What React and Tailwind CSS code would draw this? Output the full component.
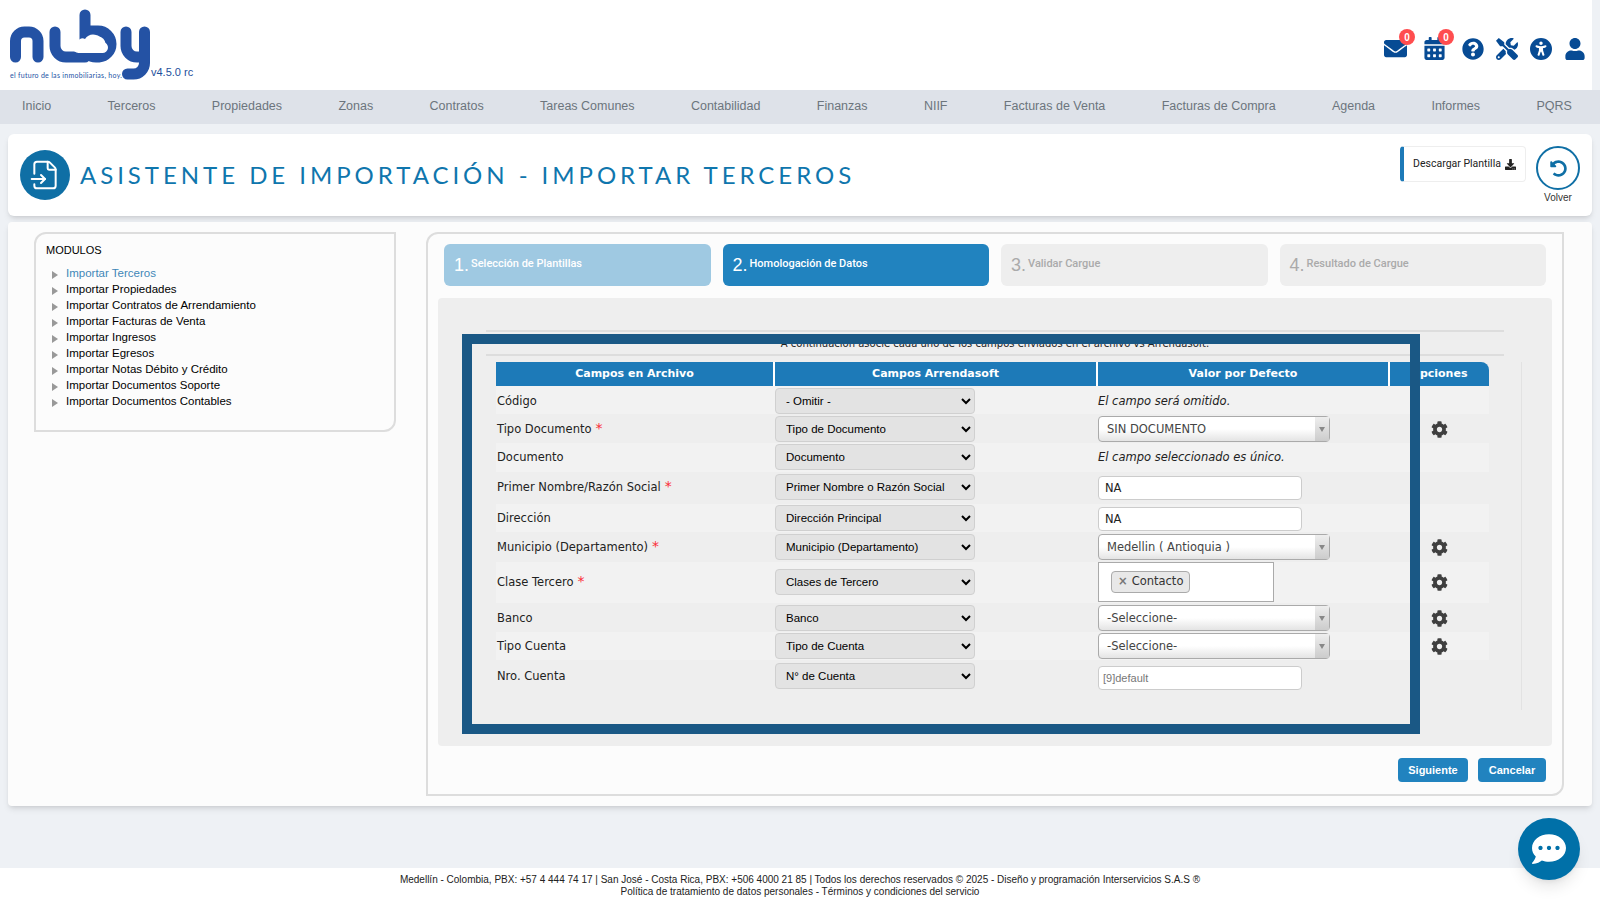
import { FileInput } from "lucide-react";
import {
  FaEnvelope,
  FaCalendarAlt,
  FaQuestionCircle,
  FaTools,
  FaUser,
  FaDownload,
  FaUndoAlt,
  FaCog,
  FaCommentDots,
} from "react-icons/fa";
import { FaUniversalAccess } from "react-icons/fa6";

const NAV = [
  "Inicio", "Terceros", "Propiedades", "Zonas", "Contratos", "Tareas Comunes", "Contabilidad",
  "Finanzas", "NIIF", "Facturas de Venta", "Facturas de Compra", "Agenda", "Informes", "PQRS",
];

const MODULES = [
  "Importar Terceros", "Importar Propiedades", "Importar Contratos de Arrendamiento",
  "Importar Facturas de Venta", "Importar Ingresos", "Importar Egresos",
  "Importar Notas Débito y Crédito", "Importar Documentos Soporte", "Importar Documentos Contables",
];

const STEPS = [
  { n: "1", label: "Selección de Plantillas", box: "bg-[#9fc9e2] text-white" },
  { n: "2", label: "Homologación de Datos", box: "bg-[#2183bf] text-white" },
  { n: "3", label: "Validar Cargue", box: "bg-[#eeeeee] text-[#aaaaaa]" },
  { n: "4", label: "Resultado de Cargue", box: "bg-[#eeeeee] text-[#aaaaaa]" },
];

const ROWS = [
  { label: "Código", field: "- Omitir -", note: "El campo será omitido.", pad: "pt-0.5" },
  { label: "Tipo Documento", req: true, field: "Tipo de Documento", chosen: "SIN DOCUMENTO", gear: true, pad: "pt-0.5 pb-px" },
  { label: "Documento", field: "Documento", note: "El campo seleccionado es único.", pad: "pt-px pb-0.5" },
  { label: "Primer Nombre/Razón Social", req: true, field: "Primer Nombre o Razón Social", input: "NA", pad: "pt-0.5 pb-1" },
  { label: "Dirección", field: "Dirección Principal", input: "NA", pad: "py-px" },
  { label: "Municipio (Departamento)", req: true, field: "Municipio (Departamento)", chosen: "Medellin ( Antioquia )", gear: true, pad: "py-0.5" },
  { label: "Clase Tercero", req: true, field: "Clases de Tercero", chip: "Contacto", gear: true, pad: "pb-px" },
  { label: "Banco", field: "Banco", chosen: "-Seleccione-", gear: true, pad: "pt-0.5 pb-px" },
  { label: "Tipo Cuenta", field: "Tipo de Cuenta", chosen: "-Seleccione-", gear: true, pad: "py-px" },
  { label: "Nro. Cuenta", field: "N° de Cuenta", placeholder: "[9]default", pad: "pt-0.5" },
];

function Logo() {
  return (
    <svg className="w-[152px] h-21 shrink-0" viewBox="0 0 152 84" fill="none">
      <g stroke="#2452a4" strokeWidth="11" strokeLinecap="round" strokeLinejoin="round">
        <path d="M15.500 57 V41 a9 9 0 0 1 9 -9 h4.500 a9 9 0 0 1 9 9 V57" />
        <path d="M55 32 V46 a11 11 0 0 0 11 11 h19" />
        <path d="M85 15 V46 a11 11 0 0 0 11 11 h3 a13 13 0 0 0 12 -13 a13 13 0 0 0 -13 -13 h-13" />
        <path d="M126 32 V46 a11 11 0 0 0 11 11 h7.500 M144.500 32 V63 a11 11 0 0 1 -11 11 h-6" />
      </g>
      <path
        d="M79 53 a6 6 0 0 1 -1 -12 a5 5 0 0 1 7 -2 a10 10 0 0 1 18 3 a5.500 5.500 0 0 1 -1 11 z"
        fill="#ffffff"
      />
      <text x="10" y="78" fontSize="7" fill="#2452a4" fontFamily="Lato" textLength="112">
        el futuro de las inmobiliarias, hoy.
      </text>
    </svg>
  );
}

function Badge({ children }) {
  return (
    <div className="relative">
      {children}
      <span className="absolute -top-2 -right-2 w-4 h-4 rounded-full bg-[#ff4d4f] text-white text-[10px] font-bold flex items-center justify-center">
        0
      </span>
    </div>
  );
}

function ChosenSelect({ value }) {
  return (
    <div className="w-58 h-6.5 flex border border-[#aaaaaa] rounded-sm bg-gradient-to-b from-white from-50% to-[#e4e4e4] text-[#444444]">
      <span className="flex-1 px-2 pt-0.5 flex items-center">{value}</span>
      <span className="w-3.5 flex items-center justify-center bg-gradient-to-b from-[#eeeeee] to-[#cccccc]">
        <svg className="w-2 h-2" viewBox="0 0 8 8"><path d="M1 2 H7 L4 7 z" fill="#888888" /></svg>
      </span>
    </div>
  );
}

function Row({ row, striped }) {
  return (
    <div className={`grid grid-cols-[279px_323px_292px_98px] items-center ${row.pad} ${striped ? "bg-[#f2f2f2]" : "bg-[#eeeeee]"}`}>
      <div className="pl-px pt-0.5 font-['DejaVu_Sans'] text-[11.5px] text-[#222222]">
        {row.label}
        {row.req && <span className="text-red-500 ml-1 text-sm leading-3">*</span>}
      </div>
      <div>
        <select defaultValue={row.field} className="block w-50 h-6.5 pl-1.5 pr-1 bg-[#e3e3e3] border border-[#d0d0d0] rounded-sm text-[11.5px] text-black">
          <option>{row.field}</option>
        </select>
      </div>
      <div className="font-['DejaVu_Sans'] text-[11.5px] text-[#222222]">
        {row.note && <em className="block pt-0.5">{row.note}</em>}
        {row.chosen && <ChosenSelect value={row.chosen} />}
        {row.input && (
          <input defaultValue={row.input} className="block w-51 h-6 mt-0.5 px-1.5 bg-white border border-[#cccccc] rounded-sm" />
        )}
        {row.placeholder && (
          <input placeholder={row.placeholder} className="block w-51 h-6 mt-1 px-1 bg-white border border-[#cccccc] rounded-sm font-['Liberation_Sans'] text-[11px] placeholder:text-[#777777]" />
        )}
        {row.chip && (
          <div className="w-44 h-10 px-3 flex items-center bg-white border border-[#aaaaaa]">
            <span className="flex items-center gap-1 h-5.5 px-1.5 bg-[#e8e8e8] border border-[#aaaaaa] rounded-sm text-[#333333]">
              <span className="text-[#777777] font-bold">×</span>
              {row.chip}
            </span>
          </div>
        )}
      </div>
      <div className="flex justify-center text-[#3f3f3f]">{row.gear && <FaCog size={17} />}</div>
    </div>
  );
}

export default function App() {
  return (
    <div className="relative h-screen overflow-hidden flex flex-col bg-[#eef1f5] font-['Liberation_Sans',sans-serif]">
      {/* Header */}
      <header className="h-22.5 mr-2 pb-1.5 bg-white flex items-end justify-between">
        <div className="flex items-end">
          <Logo />
          <span className="mb-1 -ml-px text-[11px] text-[#1d4f9c]">v4.5.0 rc</span>
        </div>
        <div className="flex items-center gap-3 pr-1.5 pb-6 text-[#074b94]">
          <div className="mr-1"><Badge><FaEnvelope size={23} /></Badge></div>
          <div className="mr-1"><Badge><FaCalendarAlt size={23} /></Badge></div>
          <FaQuestionCircle size={22} />
          <FaTools size={22} />
          <FaUniversalAccess size={22} />
          <FaUser size={22} />
        </div>
      </header>

      {/* Menu */}
      <nav className="h-8.5 pl-5.5 pr-7 pb-0.5 flex items-center justify-between bg-[#dee2e9] text-[12.5px] text-[#6c757d]">
        {NAV.map((item) => (
          <span key={item}>{item}</span>
        ))}
      </nav>

      {/* Title */}
      <section className="h-20.5 mx-2 mt-2.5 flex items-center justify-between bg-white rounded-md shadow-md">
        <div className="flex items-center gap-2.5 pl-3">
          <div className="w-12.5 h-12.5 rounded-full bg-[#0f6fa5] flex items-center justify-center text-white">
            <FileInput size={32} strokeWidth={1.5} />
          </div>
          <h1 className="font-['Lato'] text-2xl tracking-[0.165em] text-[#0f76ad]">
            ASISTENTE DE IMPORTACIÓN - IMPORTAR TERCEROS
          </h1>
        </div>
        <div className="self-start flex items-start gap-2.5 pr-3 pt-3">
          <button className="w-31.5 h-9 flex items-center justify-center gap-1 bg-white border border-[#eeeeee] border-l-4 border-l-[#1d7ab8] rounded font-['Roboto'] text-[10.5px] text-[#222222]">
            Descargar Plantilla <FaDownload size={11} />
          </button>
          <div className="flex flex-col items-center">
            <div className="w-11 h-11 rounded-full border-2 border-[#0f6fa5] flex items-center justify-center text-[#0f6fa5]">
              <FaUndoAlt size={17} />
            </div>
            <span className="text-[10px] text-[#333333]">Volver</span>
          </div>
        </div>
      </section>

      {/* Main card */}
      <main className="mx-2 mt-1.5 pl-6.5 pr-7 py-2.5 flex gap-7.5 bg-[#fcfcfc] rounded shadow-md">
        <aside className="w-90.5 h-50 shrink-0 pl-2.5 pt-2 border-2 border-[#dddddd] rounded-tl-xl rounded-br-xl">
          <h2 className="text-[11px] text-black">MODULOS</h2>
          <ul className="mt-1.5 leading-4 text-[11.5px]">
            {MODULES.map((m, i) => (
              <li key={m} className={`flex items-center gap-2 pl-1.5 ${i === 0 ? "text-[#3f87b8]" : "text-black"}`}>
                <svg className="w-1.5 h-2 mt-1" viewBox="0 0 6 8"><path d="M0 0 L6 4 L0 8 z" fill="#999999" /></svg>
                {m}
              </li>
            ))}
          </ul>
        </aside>

        <div className="flex-1 h-141 px-2.5 pt-2.5 border-2 border-[#dddddd] rounded-tl-xl rounded-br-xl flex flex-col">
          <div className="mx-1.5 grid grid-cols-4 gap-3">
            {STEPS.map((s) => (
              <div key={s.n} className={`h-10.5 px-2.5 flex items-center gap-0.5 rounded-md ${s.box}`}>
                <span className="text-lg font-light">{s.n}.</span>
                <span className="font-['Roboto'] font-medium text-[11px] mb-0.5">{s.label}</span>
              </div>
            ))}
          </div>

          <div className="relative mt-3 h-112 pt-8 bg-[#eeeeee] rounded">
            <div className="mx-12 h-6.5 border-y-2 border-[#dddddd] flex items-center justify-center font-['DejaVu_Sans'] text-[10px] text-[#222222]">
              A continuación asocie cada uno de los campos enviados en el archivo vs Arrendasoft.
            </div>
            <div className="ml-14.5 mr-7.5 mt-1.5 h-87 pr-8 border-r border-[#e2e2e2]">
              <div className="grid grid-cols-[279px_323px_292px_98px] h-6 bg-[#1d7ab8] rounded-tr-lg font-['DejaVu_Sans'] font-bold text-[11px] text-white">
                {["Campos en Archivo", "Campos Arrendasoft", "Valor por Defecto", "Opciones"].map((h, i) => (
                  <div key={h} className={`flex items-center justify-center ${i < 3 ? "border-r-2 border-white" : ""}`}>{h}</div>
                ))}
              </div>
              {ROWS.map((row, i) => (
                <Row key={row.label} row={row} striped={i % 2 === 0} />
              ))}
            </div>
            {/* frame over the table */}
            <div className="absolute top-9 left-6 right-33 bottom-3 border-10 border-[#1a5885]" />
          </div>

          <div className="mt-3 mr-1.5 flex justify-end gap-2.5 text-[11px] font-bold text-white">
            <button className="w-17.5 h-6 bg-[#2183bf] rounded">Siguiente</button>
            <button className="w-17 h-6 bg-[#2183bf] rounded">Cancelar</button>
          </div>
        </div>
      </main>

      {/* Footer */}
      <footer className="mt-auto h-8 pt-1.5 bg-white text-center text-[10px] leading-3 text-[#222222]">
        <p>Medellín - Colombia, PBX: +57 4 444 74 17 | San José - Costa Rica, PBX: +506 4000 21 85 | Todos los derechos reservados © 2025 - Diseño y programación Interservicios S.A.S ®</p>
        <p>Política de tratamiento de datos personales - Términos y condiciones del servicio</p>
      </footer>

      <button className="absolute right-5 bottom-5 w-15.5 h-15.5 rounded-full bg-[#0070a8] shadow-lg flex items-center justify-center text-white">
        <FaCommentDots size={34} />
      </button>
    </div>
  );
}
